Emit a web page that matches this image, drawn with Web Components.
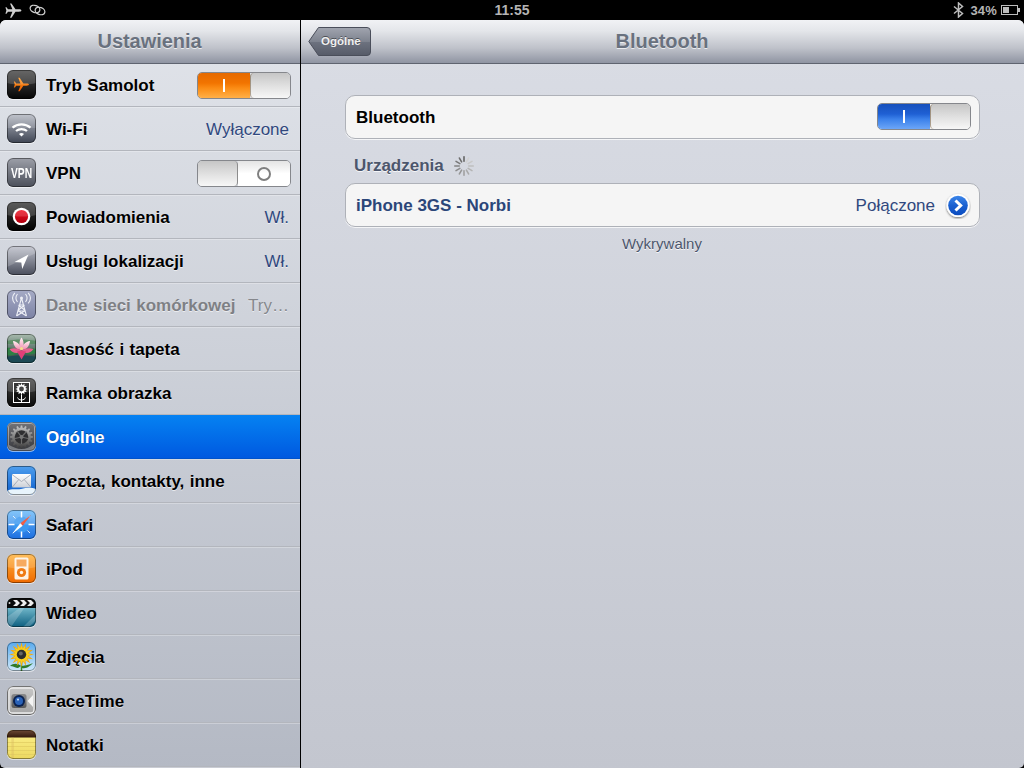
<!DOCTYPE html>
<html lang="pl">
<head>
<meta charset="utf-8">
<title>Ustawienia</title>
<style>
  html, body { margin: 0; height: 100%; background: #000; overflow: hidden; }
  body { font-family: "Liberation Sans", Arial, sans-serif; }
</style>
</head>
<body>
<ipad-shell>
  <ios-statusbar slot="status"></ios-statusbar>

  <settings-master slot="master">
    <settings-row icon="plane" label="Tryb Samolot"><ios-switch on tone="orange"></ios-switch></settings-row>
    <settings-row icon="wifi" label="Wi-Fi" value="Wyłączone"></settings-row>
    <settings-row icon="vpn" label="VPN"><ios-switch></ios-switch></settings-row>
    <settings-row icon="notif" label="Powiadomienia" value="Wł."></settings-row>
    <settings-row icon="loc" label="Usługi lokalizacji" value="Wł."></settings-row>
    <settings-row icon="cell" label="Dane sieci komórkowej" value="Try…" disabled></settings-row>
    <settings-row icon="lily" label="Jasność i tapeta"></settings-row>
    <settings-row icon="frame" label="Ramka obrazka"></settings-row>
    <settings-row icon="gear" label="Ogólne" selected></settings-row>
    <settings-row icon="mail" label="Poczta, kontakty, inne"></settings-row>
    <settings-row icon="safari" label="Safari"></settings-row>
    <settings-row icon="ipod" label="iPod"></settings-row>
    <settings-row icon="video" label="Wideo"></settings-row>
    <settings-row icon="photos" label="Zdjęcia"></settings-row>
    <settings-row icon="facetime" label="FaceTime"></settings-row>
    <settings-row icon="notes" label="Notatki"></settings-row>
  </settings-master>

  <bluetooth-detail slot="detail"></bluetooth-detail>
</ipad-shell>

<script>
// builds a star shaped polygon, used for the flower petals
function starPoints(cx, cy, r1, r2, n) {
  const pts = [];
  for (let i = 0; i < n * 2; i++) {
    const a = Math.PI * i / n - Math.PI / 2;
    const r = i % 2 ? r2 : r1;
    pts.push((cx + r * Math.cos(a)).toFixed(2) + ',' + (cy + r * Math.sin(a)).toFixed(2));
  }
  return pts.join(' ');
}

function gearPoints(cx, cy, r1, r2, n) {
  const pts = [];
  const step = Math.PI * 2 / n;
  for (let i = 0; i < n; i++) {
    const a = i * step;
    [[-0.32, r2], [-0.16, r1], [0.16, r1], [0.32, r2]].forEach(p => {
      const t = a + p[0] * step;
      pts.push((cx + p[1] * Math.cos(t)).toFixed(2) + ',' + (cy + p[1] * Math.sin(t)).toFixed(2));
    });
  }
  return pts.join(' ');
}

const PLANE = 'M22 12c0-1-1.5-1.5-3-1.5h-4.5L9.500 3H7.600l3 7.500H5L3.200 8H1.800L3 12l-1.200 4h1.400L5 13.500h5.600l-3 7.500h1.900l5-7.500H19c1.500 0 3-.5 3-1.500z';
const GLOSS = '<path d="M0 0h29v13c-8 2-20 2-29 0z" fill="#fff" opacity=".16"/>';
const grad = (id, a, b) => `<linearGradient id="${id}" x1="0" y1="0" x2="0" y2="1"><stop offset="0" stop-color="${a}"/><stop offset="1" stop-color="${b}"/></linearGradient>`;

const ICONS = {
  plane: `<defs>${grad('b', '#4a4a4a', '#050505')}${grad('o', '#ff9a1e', '#e85a00')}</defs>
    <rect width="29" height="29" fill="url(#b)"/>
    <path d="${PLANE}" fill="url(#o)" transform="translate(5.500 5.500) scale(.75)"/>`,
  wifi: `<defs>${grad('b', '#b6bac4', '#3f4553')}</defs>
    <rect width="29" height="29" fill="url(#b)"/>
    <path d="M0 0h29v14H0z" fill="#fff" opacity=".14"/>
    <g fill="none" stroke="#fff" stroke-width="2.200">
      <path d="M5.500 13.600c5-4.400 13-4.400 18 0"/><path d="M9 17c3-2.600 8-2.600 11 0"/>
    </g>
    <path d="M12 20c1.400-1.200 3.600-1.200 5 0l-2.500 2.600z" fill="#fff"/>`,
  vpn: `<defs>${grad('b', '#9da0a9', '#4b4f5a')}</defs>
    <rect width="29" height="29" fill="url(#b)"/>
    <text transform="translate(14.500 20) scale(.79 1.15)" text-anchor="middle" font-family="Liberation Sans, sans-serif" font-weight="700" font-size="13" fill="#fff">VPN</text>`,
  notif: `<defs>${grad('b', '#3c3c3c', '#000')}${grad('r', '#f01020', '#b00010')}</defs>
    <rect width="29" height="29" fill="url(#b)"/>
    <circle cx="14.500" cy="14.500" r="8.800" fill="#fff"/>
    <circle cx="14.500" cy="14.500" r="6.600" fill="url(#r)"/>`,
  loc: `<defs>${grad('b', '#bcbfca', '#4a4e5c')}</defs>
    <rect width="29" height="29" fill="url(#b)"/>
    <path d="M0 0h29v7L0 21z" fill="#fff" opacity=".18"/>
    <path d="M21.500 8.500L7.500 16l6.800 .4.9 6.600z" fill="#fff"/>`,
  cell: `<defs>${grad('b', '#a6abc6', '#7c82a4')}</defs>
    <rect width="29" height="29" fill="url(#b)"/>
    <g fill="none" stroke="#eef0f6" stroke-width="1.100">
      <path d="M14.500 8L9.500 26M14.500 8l5 18M12.600 15h3.800M11 21h7M11.500 20l6-5M17.500 20l-6-5M9.500 26l8-5M19.500 26l-8-5"/>
      <path d="M10.500 4c-2 2.500-2 5.500 0 8M18.500 4c2 2.500 2 5.500 0 8M7.800 2.800c-3 3.500-3 7 0 10.500M21.200 2.800c3 3.500 3 7 0 10.500"/>
    </g>
    <circle cx="14.500" cy="8" r="1.500" fill="#eef0f6"/>`,
  lily: `<defs>${grad('b', '#a9bcae', '#16352f')}${grad('p', '#fff3f6', '#ef86aa')}</defs>
    <rect width="29" height="29" fill="url(#b)"/>
    <path d="M0 7c8-2 20-2 29 0v3H0z" fill="#4f8a58" opacity=".7"/>
    <path d="M0 14c5-1 9 1 12 4-3 3-8 4-12 3zM29 15c-5-2-9 0-12 3 3 3 8 3 12 1z" fill="#2f7f45"/>
    <path d="M0 23c8-2 20-2 29 0v6H0z" fill="#1d4a55"/>
    <path d="M14.500 3.500c2.500 3.500 3 8 0 13-3-5-2.500-9.500 0-13z" fill="url(#p)"/>
    <path d="M6 7c4.500 .5 7.500 4 8.500 9-5 0-8-4-8.500-9zM23 7c-4.500 .5-7.500 4-8.500 9 5 0 8-4 8.500-9z" fill="url(#p)"/>
    <path d="M2.500 15c4.500-1.500 9-.5 12 2-3.500 3-9 2.500-12-2zM26.500 15c-4.500-1.500-9-.5-12 2 3.500 3 9 2.500 12-2z" fill="#e8608f"/>
    <path d="M10 17.500l4.500-1 4.500 1-4.500 8z" fill="#e03f78"/>
    <circle cx="14.500" cy="14.500" r="1.600" fill="#f4dc8a"/>`,
  frame: `<defs>${grad('b', '#4a4a4a', '#080808')}</defs>
    <rect width="29" height="29" fill="url(#b)"/>
    <rect x="6.500" y="4.500" width="16" height="20" fill="#111" stroke="#fff" stroke-width="1"/>
    <polygon points="${starPoints(14.500, 11, 6, 4, 12)}" fill="#fff"/>
    <circle cx="14.500" cy="11" r="2.400" fill="#222"/>
    <path d="M14.500 16.500v7.500M14.500 22c-2 0-3.500-1-4-2.500M14.500 22c2 0 3.500-1 4-2.500" stroke="#fff" stroke-width="1" fill="none"/>`,
  gear: `<defs>${grad('b', '#b0b2b6', '#7c7e84')}${grad('i', '#707176', '#3a3b40')}${grad('g', '#c4c4c4', '#3c3c3c')}</defs>
    <rect width="29" height="29" fill="url(#b)"/>
    <rect x="2" y="2" width="25" height="25" rx="3" fill="url(#i)"/>
    <polygon points="${gearPoints(14.500, 15, 11.500, 9.300, 16)}" fill="url(#g)"/>
    <circle cx="14.500" cy="15" r="6.800" fill="#2e2e30"/>
    <path d="M14.500 15L10 8.800M14.500 15L19.500 9.500M14.500 15L21 16.500M14.500 15L8 16.500M14.500 15v7" stroke="#6c6c6c" stroke-width="1.200"/>
    <circle cx="14.500" cy="15" r="2" fill="#777"/>
    <path d="M2 23c4 2 8 4 12.500 4S23 25 27 22v5H2z" fill="#a4a6aa" opacity=".6"/>`,
  mail: `<defs>${grad('b', '#4f9fee', '#0a5ccc')}${grad('e', '#fff', '#ccd0d6')}</defs>
    <rect width="29" height="29" fill="url(#b)"/>
    <path d="M0 25c5-3 9-1 14-2s10-2 15 0v6H0z" fill="#e8f4fc"/>
    <rect x="5" y="8" width="19" height="13.500" rx="1" fill="url(#e)"/>
    <path d="M5 8.500l9.500 7 9.500-7M5 21.500l6.800-8M24 21.500l-6.800-8" fill="none" stroke="#8f98a6" stroke-width=".7"/>`,
  safari: `<defs>${grad('b', '#6cbcfa', '#1c6ee0')}</defs>
    <rect width="29" height="29" fill="url(#b)"/>
    <circle cx="14.500" cy="14.500" r="8" fill="#3b98f0"/>
    <path d="M14.500 1.500v6M14.500 21.500v6M1.500 14.500h6M21.500 14.500h6" stroke="#fff" stroke-width="1.500"/>
    <path d="M6 6l2.500 2.500M23 6l-2.500 2.500M6 23l2.500-2.500M23 23l-2.500-2.500" stroke="#dcecfb" stroke-width="1"/>
    <path d="M24 5L13.300 13.300l2.400 2.400z" fill="#f0401e"/>
    <path d="M5 24l10.700-8.300-2.400-2.400z" fill="#fff"/>`,
  ipod: `<defs>${grad('b', '#ffb23c', '#f06a00')}</defs>
    <rect width="29" height="29" fill="url(#b)"/>
    <rect x="7.500" y="3.500" width="14" height="22" rx="1.500" fill="#fdf2e4"/>
    <rect x="9.500" y="5.500" width="10" height="7" fill="#f59a42"/>
    <circle cx="14.500" cy="18.500" r="4.600" fill="#ef7a12"/>
    <circle cx="14.500" cy="18.500" r="1.700" fill="#fdf2e4"/>`,
  video: `<defs>${grad('b', '#a2e2ee', '#0d5f80')}</defs>
    <rect width="29" height="29" fill="url(#b)"/>
    <path d="M0 19L14 9h4L4 29H0zM16 29l13-13v6l-7 7z" fill="#fff" opacity=".2"/>
    <rect width="29" height="10" fill="#0b0b0b"/>
    <path d="M6 2h4l3 3-3 3H6l3-3zM13 2h4l3 3-3 3h-4l3-3zM20 2h4l3 3-3 3h-4l3-3z" fill="#eee"/>
    <circle cx="2.500" cy="5" r="1" fill="#ddd"/>`,
  photos: `<defs>${grad('b', '#58aaee', '#cfe9fb')}</defs>
    <rect width="29" height="29" fill="url(#b)"/>
    <path d="M14.500 16v13" stroke="#3f8a2c" stroke-width="1.500"/>
    <path d="M14 24c-3-3-8-3-11 0 3 0 6 2 8 2zM15 24c3-1 7-1 11-3-3 3-6 6-11 5z" fill="#2f7a2a"/>
    <polygon points="${starPoints(14.500, 12.500, 12.500, 7, 16)}" fill="#f6a80c"/>
    <polygon points="${starPoints(14.500, 12.500, 9.500, 6, 16)}" fill="#f9cf1c"/>
    <circle cx="14.500" cy="12.500" r="4.700" fill="#2c2c2c"/>
    <circle cx="13.800" cy="11.500" r="2" fill="#666"/>`,
  facetime: `<defs>${grad('b', '#c8c8c8', '#a4a4a4')}${grad('c', '#8a8a8a', '#5a5a5a')}</defs>
    <rect width="29" height="29" fill="url(#b)"/>
    <rect x="2" y="2" width="25" height="25" rx="3" fill="none" stroke="#ededed" stroke-width="1.300"/>
    <rect x="4.500" y="8" width="15" height="14" rx="2.500" fill="url(#c)"/>
    <path d="M20.500 15l5.500-6v12z" fill="#f4f4f4"/>
    <circle cx="12" cy="15" r="6" fill="#0a2250"/>
    <circle cx="12" cy="15" r="4" fill="#2a62b8"/>
    <circle cx="11" cy="13.600" r="1.100" fill="#b8d4f4"/>`,
  notes: `<defs>${grad('b', '#fdf28c', '#ecd860')}${grad('t', '#6e4a36', '#33190c')}</defs>
    <rect width="29" height="29" fill="url(#b)"/>
    <rect width="29" height="7.500" fill="url(#t)"/>
    <path d="M0 12.500h29M0 16.500h29M0 20.500h29M0 24.500h29" stroke="#e2ce62" stroke-width=".8"/>
    <path d="M5 7.500V29M6.200 7.500V29" stroke="#d8b860" stroke-width=".5"/>`
};

class AppIcon extends HTMLElement {
  connectedCallback() {
    const name = this.getAttribute('name');
    const root = this.attachShadow({ mode: 'open' });
    const gloss = ['plane', 'notif', 'frame', 'safari', 'ipod'].includes(name) ? GLOSS : '';
    root.innerHTML = `
      <style>
        :host { display: block; width: 29px; height: 29px; flex: none; filter: drop-shadow(0 1px 0 rgba(255,255,255,.55)); }
        svg { display: block; width: 29px; height: 29px; border-radius: 6px; }
      </style>
      <svg viewBox="0 0 29 29">${ICONS[name]}${gloss}
        <rect x=".5" y=".5" width="28" height="28" rx="5.500" fill="none" stroke="#000" stroke-opacity=".42"/>
      </svg>`;
  }
}
customElements.define('app-icon', AppIcon);

class IosSwitch extends HTMLElement {
  connectedCallback() {
    const on = this.hasAttribute('on');
    const tone = this.getAttribute('tone') === 'orange'
      ? 'linear-gradient(#e66a00 0%, #f27400 40%, #fb8c14 60%, #ffb048 100%)'
      : 'linear-gradient(#1650bc 0%, #1f60d4 40%, #3a80ea 60%, #6ca6f8 100%)';
    this.attachShadow({ mode: 'open' }).innerHTML = `
      <style>
        :host { display: block; width: 94px; height: 27px; flex: none; }
        .track { display: flex; height: 100%; box-sizing: border-box; border: 1px solid #85878c; border-radius: 5px; overflow: hidden; }
        .side { flex: 1; display: flex; align-items: center; justify-content: center; }
        .on { background: ${tone}; }
        .off { background: linear-gradient(#e4e4e4 0%, #f6f6f6 35%, #fff 50%, #fff 100%); }
        .knob { flex: none; width: 40px; box-sizing: border-box; background: linear-gradient(#c6c6c6 0%, #e2e2e2 55%, #f7f7f7 100%); }
        .on + .knob { border-left: 1px solid rgba(90,60,20,.45); border-radius: 4px 0 0 4px; }
        .knob:first-child { border-right: 1px solid #8c8c8c; border-radius: 0 4px 4px 0; }
        .bar { width: 2px; height: 13px; background: #fff; }
        .ring { width: 10px; height: 10px; border: 2px solid #7f7f7f; border-radius: 50%; }
      </style>
      <div class="track">${on
        ? '<div class="side on"><div class="bar"></div></div><div class="knob"></div>'
        : '<div class="knob"></div><div class="side off"><div class="ring"></div></div>'}</div>`;
  }
}
customElements.define('ios-switch', IosSwitch);

class SettingsRow extends HTMLElement {
  connectedCallback() {
    const value = this.getAttribute('value');
    this.attachShadow({ mode: 'open' }).innerHTML = `
      <style>
        :host { display: block; height: 44px; box-sizing: border-box; border-bottom: 1px solid #b3b6bd; box-shadow: 0 1px 0 rgba(255,255,255,.28); }
        :host([selected]) { background: linear-gradient(#0582f2, #0059e0); border-bottom-color: #0053cc; }
        :host([selected]) .label { color: #fff; text-shadow: 0 -1px 0 rgba(0,0,0,.3); }
        :host([disabled]) .label { color: #7e8085; }
        :host([disabled]) .value { color: #85878c; }
        .row { display: flex; align-items: center; height: 100%; padding: 0 9px 0 7px; gap: 10px; }
        .label { flex: 1; min-width: 0; margin-top: 2px; font: 700 17px "Liberation Sans", Arial, sans-serif; word-spacing: .7px; color: #000; white-space: nowrap; text-shadow: 0 1px 0 rgba(255,255,255,.6); }
        .value { margin-top: 2px; font: 400 17px "Liberation Sans", Arial, sans-serif; color: #30487e; white-space: nowrap; text-shadow: 0 1px 0 rgba(255,255,255,.6); padding-right: 2px; }
        ::slotted(ios-switch) { margin-top: 2px; }
      </style>
      <div class="row">
        <app-icon name="${this.getAttribute('icon')}"></app-icon>
        <span class="label">${this.getAttribute('label')}</span>
        ${value ? `<span class="value">${value}</span>` : ''}
        <slot></slot>
      </div>`;
  }
}
customElements.define('settings-row', SettingsRow);

class NavHeader extends HTMLElement {
  connectedCallback() {
    this.attachShadow({ mode: 'open' }).innerHTML = `
      <style>
        :host { display: grid; grid-template-columns: 1fr auto 1fr; align-items: center; height: 44px; box-sizing: border-box; flex: none; position: relative; z-index: 1;
          background: linear-gradient(#f1f2f5 0%, #e4e6ea 25%, #bfc2ca 65%, #8f94a2 100%); border-bottom: 1px solid #5f6470; }
        .title { grid-column: 2; padding-right: 1px; font: 700 20px "Liberation Sans", Arial, sans-serif; letter-spacing: -.05px; color: #69717e; text-shadow: 0 1px 0 rgba(255,255,255,.7); }
        .left { grid-column: 1; grid-row: 1; padding-left: 7px; display: flex; }
      </style>
      <div class="left"><slot name="left"></slot></div>
      <div class="title"><slot></slot></div>`;
  }
}
customElements.define('nav-header', NavHeader);

class BackButton extends HTMLElement {
  connectedCallback() {
    this.attachShadow({ mode: 'open' }).innerHTML = `
      <style>
        :host { display: block; position: relative; width: 63px; height: 30px; margin-top: 1px; }
        svg { position: absolute; inset: 0; }
        span { position: relative; display: block; padding-left: 13px; font: 700 11.500px/29px "Liberation Sans", Arial, sans-serif; color: #f0f0f0; text-shadow: 0 -1px 0 rgba(0,0,0,.45); }
      </style>
      <svg width="63" height="30" viewBox="0 0 63 30">
        <defs><linearGradient id="bb" x1="0" y1="0" x2="0" y2="1"><stop offset="0" stop-color="#a1a5af"/><stop offset=".5" stop-color="#7e838f"/><stop offset=".52" stop-color="#6d727f"/><stop offset="1" stop-color="#565b68"/></linearGradient></defs>
        <path d="M.8 14.500L10.500.5H59a3.500 3.500 0 0 1 3.500 3.500v21a3.500 3.500 0 0 1-3.500 3.500H10.500z" fill="url(#bb)" stroke="#4a4e5a"/>
      </svg>
      <span><slot></slot></span>`;
  }
}
customElements.define('back-button', BackButton);

class SettingsMaster extends HTMLElement {
  connectedCallback() {
    this.attachShadow({ mode: 'open' }).innerHTML = `
      <style>
        :host { display: flex; flex-direction: column; height: 100%; overflow: hidden; border-radius: 6px 0 0 5px;
          background: linear-gradient(#e1e4ea, #b4b9c4); }
        .list { margin-top: -1px; }
      </style>
      <nav-header>Ustawienia</nav-header>
      <div class="list"><slot></slot></div>`;
  }
}
customElements.define('settings-master', SettingsMaster);

class GroupCard extends HTMLElement {
  connectedCallback() {
    this.attachShadow({ mode: 'open' }).innerHTML = `
      <style>
        :host { display: flex; align-items: center; justify-content: space-between; height: 44px; box-sizing: border-box; padding: 0 8px 0 10px;
          background: #f5f5f5; border: 1px solid #aeb1b8; border-radius: 10px; box-shadow: 0 1px 0 rgba(255,255,255,.75);
          font: 700 17px "Liberation Sans", Arial, sans-serif; }
      </style>
      <slot></slot>`;
  }
}
customElements.define('group-card', GroupCard);

class LoadSpinner extends HTMLElement {
  connectedCallback() {
    let spokes = '';
    for (let i = 0; i < 12; i++) {
      const shade = 100 + ((i * 11) % 12) * 10;
      spokes += `<rect x="9.200" y="0" width="1.600" height="6" rx=".8" fill="rgb(${shade},${shade},${shade})" transform="rotate(${i * 30} 10 10)"/>`;
    }
    this.attachShadow({ mode: 'open' }).innerHTML = `
      <style>:host { display: block; width: 20px; height: 20px; flex: none; } svg { display: block; }</style>
      <svg width="20" height="20" viewBox="0 0 20 20">${spokes}</svg>`;
  }
}
customElements.define('load-spinner', LoadSpinner);

class BluetoothDetail extends HTMLElement {
  connectedCallback() {
    this.attachShadow({ mode: 'open' }).innerHTML = `
      <style>
        :host { display: flex; flex-direction: column; height: 100%; overflow: hidden; border-radius: 0 6px 5px 0;
          background: linear-gradient(#dadde5, #c3c6cf); font-family: "Liberation Sans", Arial, sans-serif; }
        .content { padding: 31px 44px 0 44px; display: flex; flex-direction: column; }
        .section { display: flex; align-items: center; gap: 10px; height: 44px; box-sizing: border-box; padding: 10px 0 0 9px; font-size: 17px; font-weight: 700; color: #4c566c; text-shadow: 0 1px 0 rgba(255,255,255,.8); }
        .name { color: #000; margin-top: 2px; }
        .device { color: #2b4679; margin-top: 2px; }
        .status { display: flex; align-items: center; gap: 10px; font-weight: 400; color: #30487e; margin-top: 2px; }
        .disc { display: block; }
        .foot { margin-top: 8px; padding-right: 1px; text-align: center; font-size: 15px; color: #4c566c; text-shadow: 0 1px 0 rgba(255,255,255,.8); }
        ios-switch { margin-top: -1px; }
      </style>
      <nav-header>Bluetooth<back-button slot="left">Ogólne</back-button></nav-header>
      <div class="content">
        <group-card><span class="name">Bluetooth</span><ios-switch on></ios-switch></group-card>
        <div class="section"><span>Urządzenia</span><load-spinner></load-spinner></div>
        <group-card>
          <span class="device">iPhone 3GS - Norbi</span>
          <span class="status">Połączone
            <svg class="disc" width="26" height="26" viewBox="0 0 26 26">
              <defs>
                <linearGradient id="d" x1="0" y1="0" x2="0" y2="1"><stop offset="0" stop-color="#3c86ea"/><stop offset=".5" stop-color="#1a60d0"/><stop offset="1" stop-color="#0b4cc0"/></linearGradient>
                <filter id="s" x="-20%" y="-20%" width="140%" height="140%"><feDropShadow dx="0" dy="1" stdDeviation="1" flood-color="#000" flood-opacity=".55"/></filter>
              </defs>
              <circle cx="13" cy="12.500" r="11.500" fill="#fff" filter="url(#s)"/>
              <circle cx="13" cy="12.500" r="9.800" fill="url(#d)"/>
              <path d="M10.500 7.500l5.200 5-5.200 5" fill="none" stroke="#fff" stroke-width="3"/>
            </svg>
          </span>
        </group-card>
        <div class="foot">Wykrywalny</div>
      </div>`;
  }
}
customElements.define('bluetooth-detail', BluetoothDetail);

class IosStatusbar extends HTMLElement {
  connectedCallback() {
    this.attachShadow({ mode: 'open' }).innerHTML = `
      <style>
        :host { display: grid; grid-template-columns: 1fr auto 1fr; align-items: center; height: 20px; padding: 0 4px 0 4px; color: #b4b4b4; font: 700 14px "Liberation Sans", Arial, sans-serif; }
        .l, .r { display: flex; align-items: center; }
        .l { gap: 6px; }
        .r { justify-content: flex-end; gap: 4px; }
        .pct { font-size: 13px; letter-spacing: .2px; }
        .bt { margin-right: 2px; }
        svg { display: block; }
      </style>
      <div class="l">
        <svg width="19" height="19" viewBox="0 0 24 24"><path d="${PLANE}" fill="#cfcfcf"/></svg>
        <svg width="17" height="12" viewBox="0 0 17 12" fill="none" stroke="#cfcfcf" stroke-width="1.300">
          <ellipse cx="6" cy="5" rx="5" ry="3.500" transform="rotate(20 6 5)"/>
          <ellipse cx="11" cy="7" rx="5" ry="3.500" transform="rotate(20 11 7)"/>
        </svg>
      </div>
      <div class="time">11:55</div>
      <div class="r">
        <svg class="bt" width="11" height="16" viewBox="0 0 11 16" fill="none" stroke="#bdbdbd" stroke-width="1.500"><path d="M1 4.500l8.500 7L5.500 15V1l4 3.500L1 11.500"/></svg>
        <span class="pct">34%</span>
        <svg width="19" height="10" viewBox="0 0 19 10"><rect x=".5" y=".5" width="16" height="9" fill="none" stroke="#bdbdbd"/><rect x="2" y="2" width="6" height="6" fill="#bdbdbd"/><rect x="17" y="3" width="2" height="4" fill="#bdbdbd"/></svg>
      </div>`;
  }
}
customElements.define('ios-statusbar', IosStatusbar);

class IpadShell extends HTMLElement {
  connectedCallback() {
    this.attachShadow({ mode: 'open' }).innerHTML = `
      <style>
        :host { display: grid; grid-template-columns: 300px 723px; grid-template-rows: 20px 748px; column-gap: 1px; width: 1024px; height: 768px; background: #000; }
        .status { grid-column: 1 / -1; }
      </style>
      <div class="status"><slot name="status"></slot></div>
      <div><slot name="master"></slot></div>
      <div><slot name="detail"></slot></div>`;
  }
}
customElements.define('ipad-shell', IpadShell);
</script>
</body>
</html>
